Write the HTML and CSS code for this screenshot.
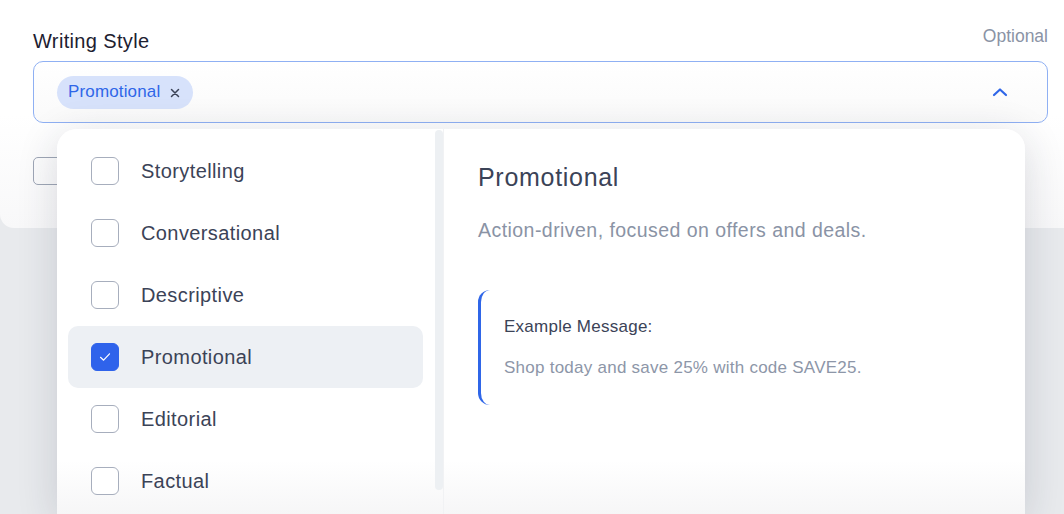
FILE: index.html
```html
<!DOCTYPE html>
<html lang="en">
<head>
<meta charset="utf-8">
<title>Writing Style</title>
<link rel="stylesheet" href="styles.css">
</head>
<body>
<div class="page">
  <section class="form-card">
    <div class="label-row">
      <label class="field-label">Writing Style</label>
      <span class="optional">Optional</span>
    </div>
    <div class="select">
      <span class="chip">Promotional
        <svg class="chip-x" width="10" height="10" viewBox="0 0 10 10"><path d="M1.5 1.5 L8.5 8.5 M8.5 1.5 L1.5 8.5" stroke="#3b4357" stroke-width="1.5" stroke-linecap="round"/></svg>
      </span>
      <svg class="chevron" width="16" height="10" viewBox="0 0 16 10"><path d="M2 8 L8 2.5 L14 8" fill="none" stroke="#2f66e8" stroke-width="2.2" stroke-linecap="round" stroke-linejoin="round"/></svg>
    </div>
    <div class="next-row"><span class="ghost-box"></span></div>
  </section>

  <div class="dropdown">
    <div class="options">
      <ul class="option-list">
        <li class="option"><span class="check"></span>Storytelling</li>
        <li class="option"><span class="check"></span>Conversational</li>
        <li class="option"><span class="check"></span>Descriptive</li>
        <li class="option selected"><span class="check checked"><svg width="16" height="16" viewBox="0 0 16 16"><path d="M3.5 8.3 L6.6 11.2 L12.5 4.8" fill="none" stroke="#fff" stroke-width="1.2" stroke-linecap="round" stroke-linejoin="round"/></svg></span>Promotional</li>
        <li class="option"><span class="check"></span>Editorial</li>
        <li class="option"><span class="check"></span>Factual</li>
      </ul>
      <div class="scroll-track"></div>
    </div>
    <div class="detail">
      <h2 class="detail-title">Promotional</h2>
      <p class="detail-desc">Action-driven, focused on offers and deals.</p>
      <div class="example">
        <p class="example-label">Example Message:</p>
        <p class="example-text">Shop today and save 25% with code SAVE25.</p>
      </div>
    </div>
  </div>
</div>
</body>
</html>
```

FILE: styles.css
```css
* { box-sizing: border-box; }
html, body { margin: 0; padding: 0; }
body {
  width: 1064px;
  height: 514px;
  overflow: hidden;
  background: #e8eaed;
  font-family: "Liberation Sans", Arial, sans-serif;
  color: #3b4357;
}
.page {
  position: relative;
  height: 514px;
}
.form-card {
  height: 228px;
  background: linear-gradient(#ffffff 0%, #ffffff 50%, #f8f8f9 100%);
  border-radius: 0 0 0 14px;
  padding: 25px 16px 0 33px;
}
.label-row {
  display: flex;
  justify-content: space-between;
  align-items: flex-start;
  height: 28px;
  margin-bottom: 8px;
}
.field-label {
  margin-top: 4px;
  font-size: 20px;
  line-height: 24px;
  letter-spacing: 0.35px;
  color: #1d2030;
}
.optional {
  font-size: 17.5px;
  line-height: 22px;
  color: #8a93a5;
}
.select {
  height: 62px;
  border: 1px solid #8fb0f3;
  border-radius: 10px;
  background: linear-gradient(#ffffff, #fafafa);
  display: flex;
  align-items: center;
  justify-content: space-between;
  padding: 0 39px 0 23px;
}
.chip {
  display: inline-flex;
  align-items: center;
  height: 33px;
  padding: 0 13px 0 11px;
  border-radius: 17px;
  background: #d7e2fb;
  color: #2f66e8;
  font-size: 17px;
  letter-spacing: 0.15px;
}
.chip-x { margin-left: 10px; margin-top: 2px; }
.chevron { margin-top: -1px; }
.next-row {
  margin-top: 34px;
}
.ghost-box {
  display: block;
  width: 40px;
  height: 28px;
  border: 1px solid #9ea6b5;
  border-radius: 5px;
}

.dropdown {
  position: absolute;
  left: 57px;
  top: 129px;
  width: 968px;
  height: 385px;
  background: linear-gradient(#ffffff 0%, #ffffff 86%, #f6f6f7 100%);
  border-radius: 20px 20px 0 0;
  box-shadow: 0 8px 40px rgba(30, 40, 60, 0.16);
  display: flex;
  overflow: hidden;
}
.options {
  width: 387px;
  flex: none;
  display: flex;
  border-right: 1px solid #f1f2f4;
}
.option-list {
  list-style: none;
  margin: 0;
  padding: 11px 0 0 11px;
  width: 366px;
}
.option {
  height: 62px;
  display: flex;
  align-items: center;
  padding-left: 23px;
  border-radius: 10px;
  font-size: 20px;
  color: #3b4357;
  letter-spacing: 0.4px;
}
.option.selected { background: #edf0f4; }
.check {
  width: 28px;
  height: 28px;
  flex: none;
  border: 1.5px solid #a7aebd;
  border-radius: 6px;
  margin-right: 22px;
  display: flex;
  align-items: center;
  justify-content: center;
  background: #fff;
}
.check.checked {
  background: #2f63eb;
  border-color: #2f63eb;
}
.scroll-track {
  width: 8px;
  height: 360px;
  margin: 1px 0 0 12px;
  border-radius: 4px;
  background: #edf0f3;
}
.detail {
  flex: 1;
  padding: 32px 0 0 34px;
}
.detail-title {
  margin: 0;
  font-weight: normal;
  font-size: 25px;
  line-height: 32px;
  letter-spacing: 0.7px;
  color: #3b4357;
}
.detail-desc {
  margin: 25px 0 0;
  font-size: 19.5px;
  line-height: 24px;
  letter-spacing: 0.45px;
  color: #8a93a5;
}
.example {
  margin-top: 48px;
  width: 420px;
  height: 115px;
  border-left: 3px solid #2f66e8;
  border-radius: 12px 0 0 12px;
  padding: 26px 0 0 23px;
}
.example-label {
  margin: 0;
  font-size: 17px;
  line-height: 22px;
  letter-spacing: 0.25px;
  color: #3b4357;
}
.example-text {
  margin: 19px 0 0;
  font-size: 17px;
  line-height: 22px;
  letter-spacing: 0.25px;
  color: #8d96a8;
}
```
